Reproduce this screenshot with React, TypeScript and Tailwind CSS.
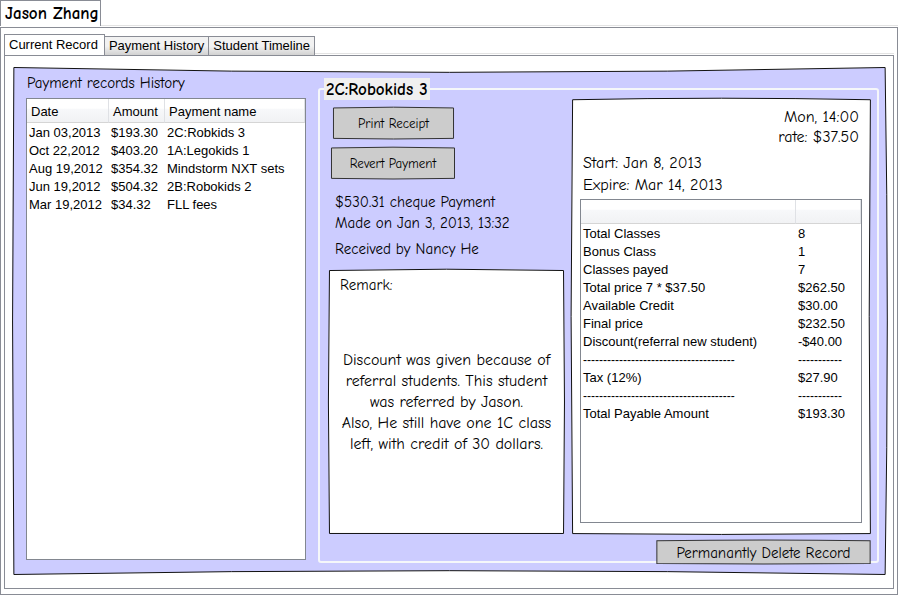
import { useState } from "react";
import type { ReactNode } from "react";
import { clsx } from "clsx";

const hand = "font-['Comic_Sans_MS','Comic_Neue','Noto_Sans',sans-serif]";

type SketchProps = {
  children: ReactNode;
  path: string;
  fill: string;
  className?: string;
  stroke?: string;
};

/* A box with slightly bowed, hand-drawn edges that scale with its content. */
function Sketch({ children, path, fill, className, stroke = "#111" }: SketchProps) {
  return (
    <div className={clsx("relative isolate", className)}>
      <svg
        aria-hidden="true"
        className="absolute inset-0 -z-10 size-full overflow-visible"
        viewBox="0 0 100 100"
        preserveAspectRatio="none"
      >
        <path d={path} fill={fill} stroke={stroke} strokeWidth="1" vectorEffect="non-scaling-stroke" />
      </svg>
      {children}
    </div>
  );
}

const mainPath = "M0.1 0.1Q50 2 99.9 0.1Q100.4 50 99.9 99.9Q50 98.4 0.1 99.9Q-0.2 50 0.1 0.1Z";
const remarkPath = "M0.2 0.2Q50 -0.8 99.8 0.2Q100.6 50 99.8 99.8L0.2 99.8Q-0.7 50 0.2 0.2Z";
const detailPath = "M0.2 0.4Q50 -0.3 99.8 0.4Q99 50 99.8 99.9Q50 100.3 0.2 99.9Q-0.8 50 0.2 0.4Z";
const buttonPath = "M0.4 3Q50 -2 99.6 3L99.6 98Q50 102 0.4 98Z";

function SketchButton({ children, className }: { children: string; className: string }) {
  return (
    <Sketch path={buttonPath} fill="#cccccc" stroke="#333" className={className}>
      <button type="button" className="size-full pt-0.5">
        {children}
      </button>
    </Sketch>
  );
}

const payments = [
  ["Jan 03,2013", "$193.30", "2C:Robkids 3"],
  ["Oct 22,2012", "$403.20", "1A:Legokids 1"],
  ["Aug 19,2012", "$354.32", "Mindstorm NXT sets"],
  ["Jun 19,2012", "$504.32", "2B:Robokids 2"],
  ["Mar 19,2012", "$34.32", "FLL fees"],
];

const charges = [
  ["Total Classes", "8"],
  ["Bonus Class", "1"],
  ["Classes payed", "7"],
  ["Total price 7 * $37.50", "$262.50"],
  ["Available Credit", "$30.00"],
  ["Final price", "$232.50"],
  ["Discount(referral new student)", "-$40.00"],
  ["--------------------------------------", "-----------"],
  ["Tax (12%)", "$27.90"],
  ["--------------------------------------", "-----------"],
  ["Total Payable Amount", "$193.30"],
];

const tabs = ["Current Record", "Payment History", "Student Timeline"];

const headRow =
  "h-6 border-b border-[#d5d5d5] bg-linear-to-b from-white from-40% via-[#f7f8fa] via-45% to-[#f1f2f4]";

function PaymentHistory() {
  return (
    <section className="flex w-[280px] shrink-0 flex-col">
      <h2 id="history-title" className={clsx(hand, "h-[31px] pt-1 pl-px text-[15px] leading-6")}>
        Payment records History
      </h2>
      <div className="flex-1 border border-[#828790] bg-white">
        <table aria-labelledby="history-title" className="w-full table-fixed border-separate border-spacing-0 text-left">
          <colgroup>
            <col className="w-[82px]" />
            <col className="w-14" />
            <col />
          </colgroup>
          <thead>
            <tr>
              {["Date", "Amount", "Payment name"].map((title) => (
                <th key={title} className={clsx(headRow, "border-r border-r-[#dfe1e5] pt-0.5 pl-1 font-normal")}>
                  {title}
                </th>
              ))}
            </tr>
          </thead>
          <tbody>
            {payments.map(([date, amount, name]) => (
              <tr key={date} className="h-[18px] leading-4 whitespace-nowrap">
                <td className="pt-0.5 pl-0.5">{date}</td>
                <td className="pt-0.5 pl-0.5">{amount}</td>
                <td className="pt-0.5 pl-0.5">{name}</td>
              </tr>
            ))}
          </tbody>
        </table>
      </div>
    </section>
  );
}

function PaymentSummary() {
  return (
    <div className={clsx(hand, "flex w-[235px] shrink-0 flex-col text-[15px]")}>
      <SketchButton className="mt-[7px] ml-1 h-8 w-[121px] text-[13px]">Print Receipt</SketchButton>
      <SketchButton className="mt-2 ml-0.5 h-8 w-[124px] text-[13px]">Revert Payment</SketchButton>
      <div className="mt-[13px] pl-1.5 leading-[21px]">
        <p>$530.31 cheque Payment</p>
        <p>Made on Jan 3, 2013, 13:32</p>
        <p className="mt-[5px]">Received by Nancy He</p>
      </div>
      <Sketch path={remarkPath} fill="#fff" className="mt-2.5 flex-1 leading-[21px]">
        <h3 className="pt-[5px] pl-[11px]">Remark:</h3>
        <p className="pt-[54px] text-center text-[16px]">
          Discount was given because of
          <br />
          referral students. This student
          <br />
          was referred by Jason.
          <br />
          Also, He still have one 1C class
          <br />
          left, with credit of 30 dollars.
        </p>
      </Sketch>
    </div>
  );
}

function ClassDetails() {
  return (
    <Sketch path={detailPath} fill="#fff" className="-mt-0.5 flex min-h-[436px] flex-1 flex-col pr-[9px] pb-[11px] pl-2">
      <div className={clsx(hand, "pt-[9px] text-[16px]")}>
        <div className="pr-[3px] text-right leading-5">
          <p>Mon, 14:00</p>
          <p>rate: $37.50</p>
        </div>
        <div className="mt-[5px] mb-[3px] pl-[3px] leading-[22px]">
          <p>Start: Jan 8, 2013</p>
          <p>Expire: Mar 14, 2013</p>
        </div>
      </div>
      <div className="flex-1 border border-[#828790] bg-white">
        <table aria-label="Charges" className="w-full table-fixed border-separate border-spacing-0">
          <colgroup>
            <col />
            <col className="w-[65px]" />
          </colgroup>
          <thead>
            <tr>
              <th aria-label="Item" className={clsx(headRow, "border-r border-r-[#dfe1e5]")} />
              <th aria-label="Amount" className={clsx(headRow, "border-r border-r-[#dfe1e5]")} />
            </tr>
          </thead>
          <tbody>
            {charges.map(([item, value], i) => (
              <tr
                key={i}
                className={clsx("h-[18px] leading-4 whitespace-nowrap", item.startsWith("--") && "text-[12px]")}
              >
                <td className="pt-0.5 pl-0.5">{item}</td>
                <td className="pt-0.5 pl-0.5">{value}</td>
              </tr>
            ))}
          </tbody>
        </table>
      </div>
    </Sketch>
  );
}

export default function App() {
  const [active, setActive] = useState(0);
  return (
    <main className="bg-white pr-0.5 font-['Liberation_Sans',Arial,sans-serif] text-[13px] text-black">
      <div className="flex h-[27px] items-start">
        <h1
          className={clsx(
            hand,
            "h-[26px] w-[101px] border border-b-0 border-[#898c95] pl-1 text-[17px] leading-[26px] font-bold whitespace-nowrap",
          )}
        >
          Jason Zhang
        </h1>
        <div className="h-[26px] flex-1 border-b border-[#e3e3e3]" />
      </div>

      <div className="border border-[#898c95] px-[3px] pt-1.5 pb-[5px]">
        <div className="flex h-[21px] items-end" role="tablist">
          {tabs.map((tab, i) => (
            <button
              key={tab}
              type="button"
              role="tab"
              aria-selected={i === active}
              onClick={() => setActive(i)}
              className={clsx(
                "border border-b-0 border-[#898c95] whitespace-nowrap",
                i === active
                  ? "h-[21px] bg-white pr-1.5 pl-1 leading-[18px]"
                  : "-ml-px h-[19px] bg-linear-to-b from-[#f2f2f2] from-50% to-[#d2d2d2] px-1 leading-[18px]",
              )}
            >
              {tab}
            </button>
          ))}
          <div className="h-0.5 flex-1 border-t border-[#e3e3e3]" />
        </div>

        <div className="border border-[#898c95] pt-[11px] pr-[7px] pb-[13px] pl-2">
          <Sketch path={mainPath} fill="#ccccff" className="flex gap-3 pr-[7px] pb-3 pl-[13px]">
            <div className="flex pb-[3px]">
              <PaymentHistory />
            </div>
            <fieldset className="mt-[11px] min-w-0 flex-1 rounded-[3px] border-2 border-[#f5f7fa] pr-1.5 pl-[9px]">
              <legend className={clsx(hand, "-ml-[5px] h-[22px] bg-[#f0f0f0] px-0.5 text-[17px] leading-[23px] font-bold")}>
                2C:Robokids 3
              </legend>
              <div className="flex gap-2">
                <PaymentSummary />
                <ClassDetails />
              </div>
              <div className="mt-1.5 -mb-[3px] flex justify-end">
                <SketchButton className={clsx(hand, "h-6 w-[215px] text-[15px]")}>Permanantly Delete Record</SketchButton>
              </div>
            </fieldset>
          </Sketch>
        </div>
      </div>
    </main>
  );
}
